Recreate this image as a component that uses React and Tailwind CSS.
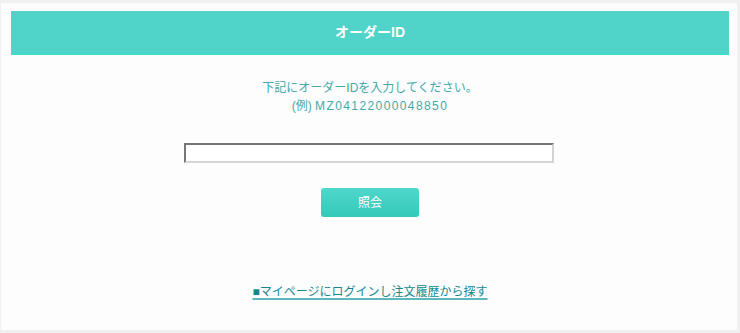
import { useState } from "react";

// Order ID lookup panel: teal heading, hint text, one input, a submit button
// and a fallback link to the order history.
export default function App() {
  const [orderId, setOrderId] = useState("");

  return (
    <div
      className="min-h-[333px] w-[740px] bg-[#f0f0f0] pt-[3px] pr-[3px] pb-[3px] pl-[1px]"
      style={{ fontFamily: '"Liberation Sans", "Noto Sans CJK JP", sans-serif' }}
    >
      <div className="flex h-[327px] flex-col bg-[#fdfdfd] px-[10px] pt-[8px] pr-[8px]">
        <div className="flex h-[44px] items-center justify-center border-b-2 border-[#3ddccb] bg-[#50d3c8]">
          <h1 className="text-[14px] font-bold text-white">オーダーID</h1>
        </div>

        <div className="mt-[24px] text-center text-[12px] leading-[18px] text-[#44a9a8]">
          <p>下記にオーダーIDを入力してください。</p>
          <p>
            (例) <span className="tracking-[1.4px]">MZ04122000048850</span>
          </p>
        </div>

        <form
          className="mt-[28px] flex flex-col items-center"
          onSubmit={(e) => e.preventDefault()}
        >
          <input
            type="text"
            value={orderId}
            onChange={(e) => setOrderId(e.target.value)}
            className="-ml-[2px] h-[20px] w-[370px] border-2 border-t-[#767676] border-l-[#767676] border-r-[#d4d4d4] border-b-[#d4d4d4] bg-white px-1 text-[12px] outline-none"
          />
          <button
            type="submit"
            className="mt-[25px] h-[29px] w-[98px] rounded-[3px] bg-gradient-to-b from-[#4fd7cb] to-[#33c9ba] text-[12px] text-white"
          >
            照会
          </button>
        </form>

        <div className="mt-[62px] text-center">
          <a
            href="#"
            className="text-[12px] leading-[18px] text-[#17878f] underline decoration-[#5bb8bd] decoration-[1.5px] underline-offset-2"
          >
            ■マイページにログインし注文履歴から探す
          </a>
        </div>
      </div>
    </div>
  );
}
